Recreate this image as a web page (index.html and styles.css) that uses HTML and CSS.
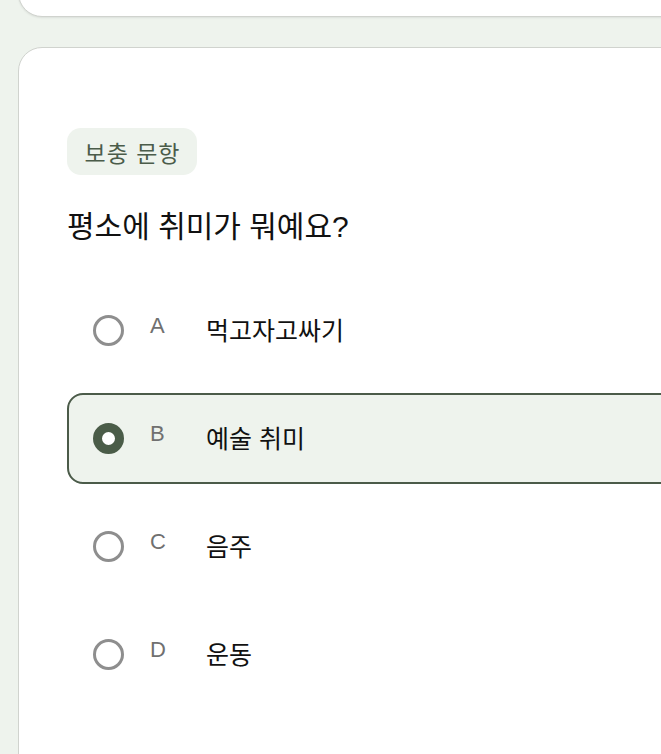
FILE: index.html
```html
<!DOCTYPE html>
<html lang="ko">
<head>
<meta charset="utf-8">
<title>보충 문항</title>
<link rel="stylesheet" href="styles.css">
</head>
<body>
<div class="page">
  <div class="card card-prev"></div>
  <section class="card card-question">
    <span class="badge">보충 문항</span>
    <h2 class="question">평소에 취미가 뭐예요?</h2>
    <div class="options">
      <div class="option">
        <span class="radio"></span>
        <span class="letter">A</span>
        <span class="label">먹고자고싸기</span>
      </div>
      <div class="option selected">
        <span class="radio"></span>
        <span class="letter">B</span>
        <span class="label">예술 취미</span>
      </div>
      <div class="option">
        <span class="radio"></span>
        <span class="letter">C</span>
        <span class="label">음주</span>
      </div>
      <div class="option">
        <span class="radio"></span>
        <span class="letter">D</span>
        <span class="label">운동</span>
      </div>
    </div>
  </section>
</div>
</body>
</html>
```

FILE: styles.css
```css
html, body {
  margin: 0;
  padding: 0;
  background: #eef3ed;
  overflow: hidden;
  height: 754px;
}

body {
  font-family: "Liberation Sans", "Noto Sans CJK KR", sans-serif;
  color: #111;
}

.page {
  padding-left: 18px;
}

.card {
  width: 760px;
  background: #ffffff;
  border: 1.5px solid #d0d3ce;
  border-radius: 24px;
  box-sizing: border-box;
}

.card-prev {
  height: 100px;
  margin-top: -83px;
  box-shadow: 0 1px 2px rgba(0, 0, 0, 0.08);
}

.card-question {
  margin-top: 30px;
  height: 900px;
  padding: 80px 0 0 48px;
}

.badge {
  display: inline-flex;
  align-items: center;
  justify-content: center;
  height: 47px;
  width: 130px;
  box-sizing: border-box;
  background: #eef3ed;
  color: #4b5c4a;
  border-radius: 14px;
  font-size: 23px;
  letter-spacing: 1px;
  padding-left: 1px;
}

.question {
  margin: 32px 0 0 0;
  font-size: 30px;
  line-height: 40px;
  font-weight: 400;
  color: #111;
}

.options {
  display: flex;
  flex-direction: column;
  gap: 17px;
  margin-top: 38px;
}

.option {
  display: flex;
  align-items: center;
  height: 91px;
  box-sizing: border-box;
  padding-left: 24px;
  border: 2px solid transparent;
  border-radius: 16px;
}

.option.selected {
  background: #eef3ed;
  border-color: #4b5b49;
}

.radio {
  width: 31px;
  height: 31px;
  box-sizing: border-box;
  border: 3px solid #8e8e8e;
  border-radius: 50%;
  background: #fff;
  flex: none;
}

.selected .radio {
  border: 9.5px solid #4a5c48;
  background: #ffffff;
}

.letter {
  width: 30px;
  margin-left: 26px;
  margin-right: 26px;
  margin-bottom: 9px;
  font-size: 22px;
  color: #707070;
  line-height: 24px;
}

.label {
  font-size: 25px;
  line-height: 30px;
  color: #111;
}
```
